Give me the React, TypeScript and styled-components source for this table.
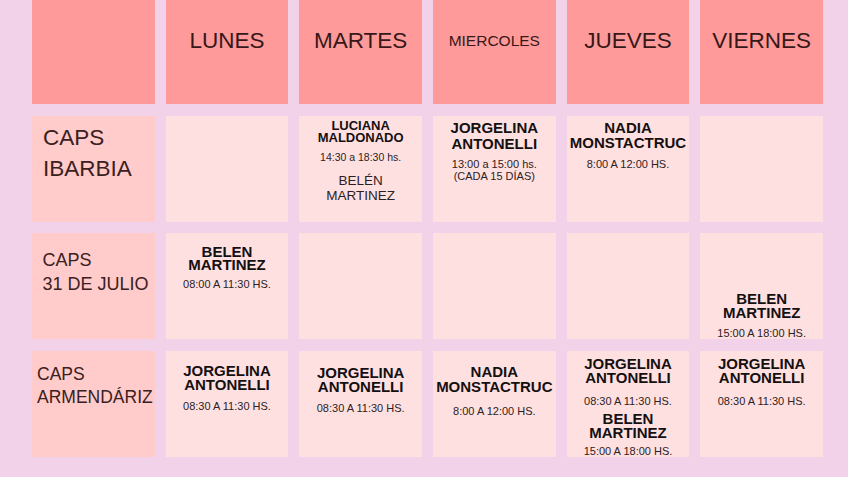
import React from 'react';
import styled, { createGlobalStyle } from 'styled-components';

const GlobalStyle = createGlobalStyle`
  html, body {
    margin: 0;
    padding: 0;
    background: #f1d2e8;
  }
  body {
    font-family: 'Liberation Sans', Arial, sans-serif;
  }
`;

const Page = styled.div`
  width: 848px;
  height: 477px;
  overflow: hidden;
  box-sizing: border-box;
  padding: 0 25px 20px 32px;
  background: #f1d2e8;
`;

const Grid = styled.div`
  display: grid;
  grid-template-columns: repeat(6, 1fr);
  grid-template-rows: 104px repeat(3, 106px);
  column-gap: 11px;
  row-gap: 11.5px;
  height: 100%;
`;

const DayCell = styled.div<{ $small?: boolean }>`
  background: #fe9a9a;
  padding-top: 28px;
  text-align: center;
  color: #361818;
  font-size: ${(p) => (p.$small ? 15.5 : 22.5)}px;
  line-height: 26px;
`;

const PlaceCell = styled.div<{ $size: number; $lh: number; $pad: number; $left: number }>`
  background: #ffcbcb;
  color: #3a2020;
  font-size: ${(p) => p.$size}px;
  line-height: ${(p) => p.$lh}px;
  padding: ${(p) => p.$pad}px 0 0 ${(p) => p.$left}px;
  white-space: nowrap;
`;

const SlotCell = styled.div<{ $pad: number; $bottom?: boolean }>`
  background: #ffe0e1;
  display: flex;
  flex-direction: column;
  align-items: center;
  justify-content: ${(p) => (p.$bottom ? 'flex-end' : 'flex-start')};
  padding-top: ${(p) => p.$pad}px;
  text-align: center;
  white-space: nowrap;
  overflow: hidden;
`;

const Name = styled.div<{ $size: number; $lh: number; $gap: number; $plain?: boolean }>`
  margin-top: ${(p) => p.$gap}px;
  font-size: ${(p) => p.$size}px;
  line-height: ${(p) => p.$lh}px;
  font-weight: ${(p) => (p.$plain ? 400 : 700)};
  color: ${(p) => (p.$plain ? '#2c1e1e' : '#141010')};
`;

const TimeList = styled.div<{ $gap: number; $size: number }>`
  margin-top: ${(p) => p.$gap}px;
  font-size: ${(p) => p.$size}px;
  line-height: 12px;
  color: #2c2222;
`;

type Block = {
  name: string[];
  size?: number;
  lh?: number;
  gap?: number;
  plain?: boolean;
  times?: string[];
  timeSize?: number;
  timeGap?: number;
};

type Slot = { pad: number; bottom?: boolean; blocks: Block[] };

type Row = {
  place: string[];
  size: number;
  lh: number;
  pad: number;
  left: number;
  slots: Slot[];
};

const days = [
  { label: 'LUNES' },
  { label: 'MARTES' },
  { label: 'MIERCOLES', small: true },
  { label: 'JUEVES' },
  { label: 'VIERNES' },
];

const JORGE = ['JORGELINA', 'ANTONELLI'];
const NADIA = ['NADIA', 'MONSTACTRUC'];
const BELEN = ['BELEN', 'MARTINEZ'];
const EMPTY: Slot = { pad: 0, blocks: [] };

const rows: Row[] = [
  {
    place: ['CAPS', 'IBARBIA'],
    size: 22.5,
    lh: 31,
    pad: 6,
    left: 11,
    slots: [
      EMPTY,
      {
        pad: 4.5,
        blocks: [
          { name: ['LUCIANA', 'MALDONADO'], size: 13, lh: 12, times: ['14:30 a 18:30 hs.'], timeSize: 10.5, timeGap: 7 },
          { name: ['BELÉN', 'MARTINEZ'], plain: true, size: 13.5, lh: 15, gap: 10 },
        ],
      },
      {
        pad: 4.5,
        blocks: [{ name: JORGE, lh: 15.5, times: ['13:00 a 15:00 hs.', '(CADA 15 DÍAS)'], timeGap: 7 }],
      },
      {
        pad: 4.5,
        blocks: [{ name: NADIA, lh: 15, times: ['8:00 A 12:00 HS.'], timeGap: 8 }],
      },
      EMPTY,
    ],
  },
  {
    place: ['CAPS', '31 DE JULIO'],
    size: 18,
    lh: 24,
    pad: 15,
    left: 10.5,
    slots: [
      {
        pad: 13,
        blocks: [{ name: BELEN, lh: 12.5, times: ['08:00 A 11:30 HS.'], timeGap: 7 }],
      },
      EMPTY,
      EMPTY,
      EMPTY,
      {
        pad: 0,
        bottom: true,
        blocks: [{ name: BELEN, lh: 14, times: ['15:00 A 18:00 HS.'], timeGap: 7 }],
      },
    ],
  },
  {
    place: ['CAPS', 'ARMENDÁRIZ'],
    size: 17.5,
    lh: 23,
    pad: 12.5,
    left: 5,
    slots: [
      {
        pad: 13,
        blocks: [{ name: JORGE, lh: 14, times: ['08:30 A 11:30 HS.'], timeGap: 8 }],
      },
      {
        pad: 15,
        blocks: [{ name: JORGE, lh: 14, times: ['08:30 A 11:30 HS.'], timeGap: 8 }],
      },
      {
        pad: 13,
        blocks: [{ name: NADIA, lh: 15.5, times: ['8:00 A 12:00 HS.'], timeGap: 10 }],
      },
      {
        pad: 6,
        blocks: [
          { name: JORGE, lh: 14, times: ['08:30 A 11:30 HS.'], timeGap: 10 },
          { name: BELEN, lh: 14, gap: 5, times: ['15:00 A 18:00 HS.'], timeGap: 5.5 },
        ],
      },
      {
        pad: 6,
        blocks: [{ name: JORGE, lh: 14, times: ['08:30 A 11:30 HS.'], timeGap: 10 }],
      },
    ],
  },
];

function Lines({ items }: { items: string[] }) {
  return (
    <>
      {items.map((t, i) => (
        <React.Fragment key={i}>
          {i > 0 && <br />}
          {t}
        </React.Fragment>
      ))}
    </>
  );
}

function SlotView({ slot }: { slot: Slot }) {
  return (
    <SlotCell $pad={slot.pad} $bottom={slot.bottom}>
      {slot.blocks.map((b, i) => (
        <React.Fragment key={i}>
          <Name $size={b.size ?? 15} $lh={b.lh ?? 14} $gap={b.gap ?? 0} $plain={b.plain}>
            <Lines items={b.name} />
          </Name>
          {b.times && (
            <TimeList $gap={b.timeGap ?? 7} $size={b.timeSize ?? 11}>
              <Lines items={b.times} />
            </TimeList>
          )}
        </React.Fragment>
      ))}
    </SlotCell>
  );
}

export default function App() {
  return (
    <>
      <GlobalStyle />
      <Page>
        <Grid>
          <DayCell />
          {days.map((d) => (
            <DayCell key={d.label} $small={d.small}>
              {d.label}
            </DayCell>
          ))}

          {rows.map((r) => (
            <React.Fragment key={r.place.join(' ')}>
              <PlaceCell $size={r.size} $lh={r.lh} $pad={r.pad} $left={r.left}>
                <Lines items={r.place} />
              </PlaceCell>
              {r.slots.map((s, i) => (
                <SlotView key={i} slot={s} />
              ))}
            </React.Fragment>
          ))}
        </Grid>
      </Page>
    </>
  );
}
